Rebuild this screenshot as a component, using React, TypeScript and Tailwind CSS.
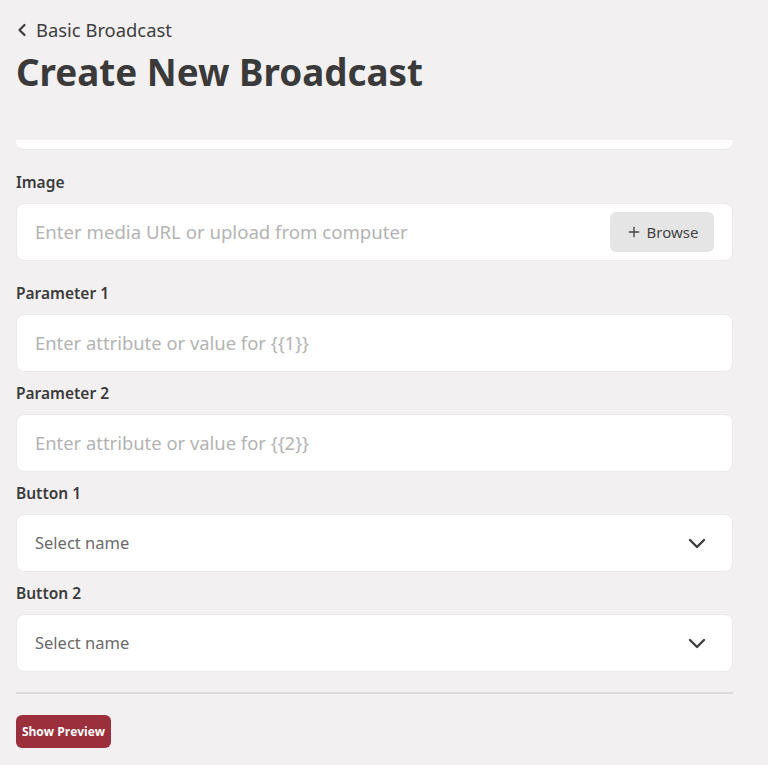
import { Plus } from 'lucide-react';

const font = { fontFamily: '"Noto Sans", "Open Sans", sans-serif' };

function Chevron() {
  return (
    <svg width="18" height="11" viewBox="0 0 18 11" fill="none">
      <path d="M2 2l7 7 7-7" stroke="#3f3f3f" strokeWidth="2.4" strokeLinecap="round" strokeLinejoin="round" />
    </svg>
  );
}

function Field({ label, children, extra }: { label: string; children: React.ReactNode; extra?: boolean }) {
  return (
    <div className={extra ? 'mb-[20px]' : 'mb-[9px]'}>
      <div className="text-[15.5px] leading-6 font-semibold text-[#3b3b3b]">{label}</div>
      <div className="mt-[9px]">{children}</div>
    </div>
  );
}

function TextBox({ placeholder }: { placeholder: string }) {
  return (
    <div className="h-[58px] bg-white rounded-lg border border-[#ebe9ea] flex items-center px-[18px]">
      <span className="text-[18.4px] text-[#b3b3b3]">{placeholder}</span>
    </div>
  );
}

function SelectBox() {
  return (
    <div className="h-[58px] bg-white rounded-lg border border-[#ebe9ea] flex items-center justify-between pl-[18px] pr-[26px]">
      <span className="text-[16.5px] text-[#6a6a6a]">Select name</span>
      <Chevron />
    </div>
  );
}

export default function App() {
  return (
    <div className="min-h-screen bg-[#f2f0f1] pl-4 pr-[35px]" style={font}>
      {/* Header */}
      <div className="pt-[18px] flex items-center gap-[9px] h-[41px] text-[#3e3e3e]">
        <svg width="10" height="14" viewBox="0 0 10 14" fill="none" className="ml-[1px] mt-[1px]">
          <path d="M7.5 2L2.5 7l5 5" stroke="#3e3e3e" strokeWidth="2.2" strokeLinecap="round" strokeLinejoin="round" />
        </svg>
        <span className="text-[18.4px] leading-6">Basic Broadcast</span>
      </div>
      <h1 className="mt-[12px] text-[36.8px] leading-[38px] font-bold text-[#3a3a3a]">Create New Broadcast</h1>

      {/* clipped card from above */}
      <div className="mt-[49px] h-[10px] bg-white rounded-b-lg border-b border-[#e8e6e7]" />

      <div className="mt-[20px]">
        <Field label="Image" extra>
          <div className="h-[58px] bg-white rounded-lg border border-[#ebe9ea] flex items-center justify-between pl-[18px] pr-[18px]">
            <span className="text-[18.6px] text-[#b3b3b3]">Enter media URL or upload from computer</span>
            <button className="h-[40px] w-[104px] rounded-md bg-[#e6e5e6] flex items-center justify-center gap-[5px] text-[15px] text-[#444]">
              <Plus size={16} strokeWidth={2} />
              Browse
            </button>
          </div>
        </Field>
        <Field label="Parameter 1">
          <TextBox placeholder="Enter attribute or value for {{1}}" />
        </Field>
        <Field label="Parameter 2">
          <TextBox placeholder="Enter attribute or value for {{2}}" />
        </Field>
        <Field label="Button 1">
          <SelectBox />
        </Field>
        <Field label="Button 2">
          <SelectBox />
        </Field>
      </div>

      <div className="mt-[20px] border-t-2 border-[#dcdadb]" />

      <button className="mt-[21px] h-[33px] w-[95px] rounded-md bg-[#9b2f3c] text-white text-[12px] font-bold" style={{ fontFamily: '"Open Sans", sans-serif' }}>
        Show Preview
      </button>
    </div>
  );
}
